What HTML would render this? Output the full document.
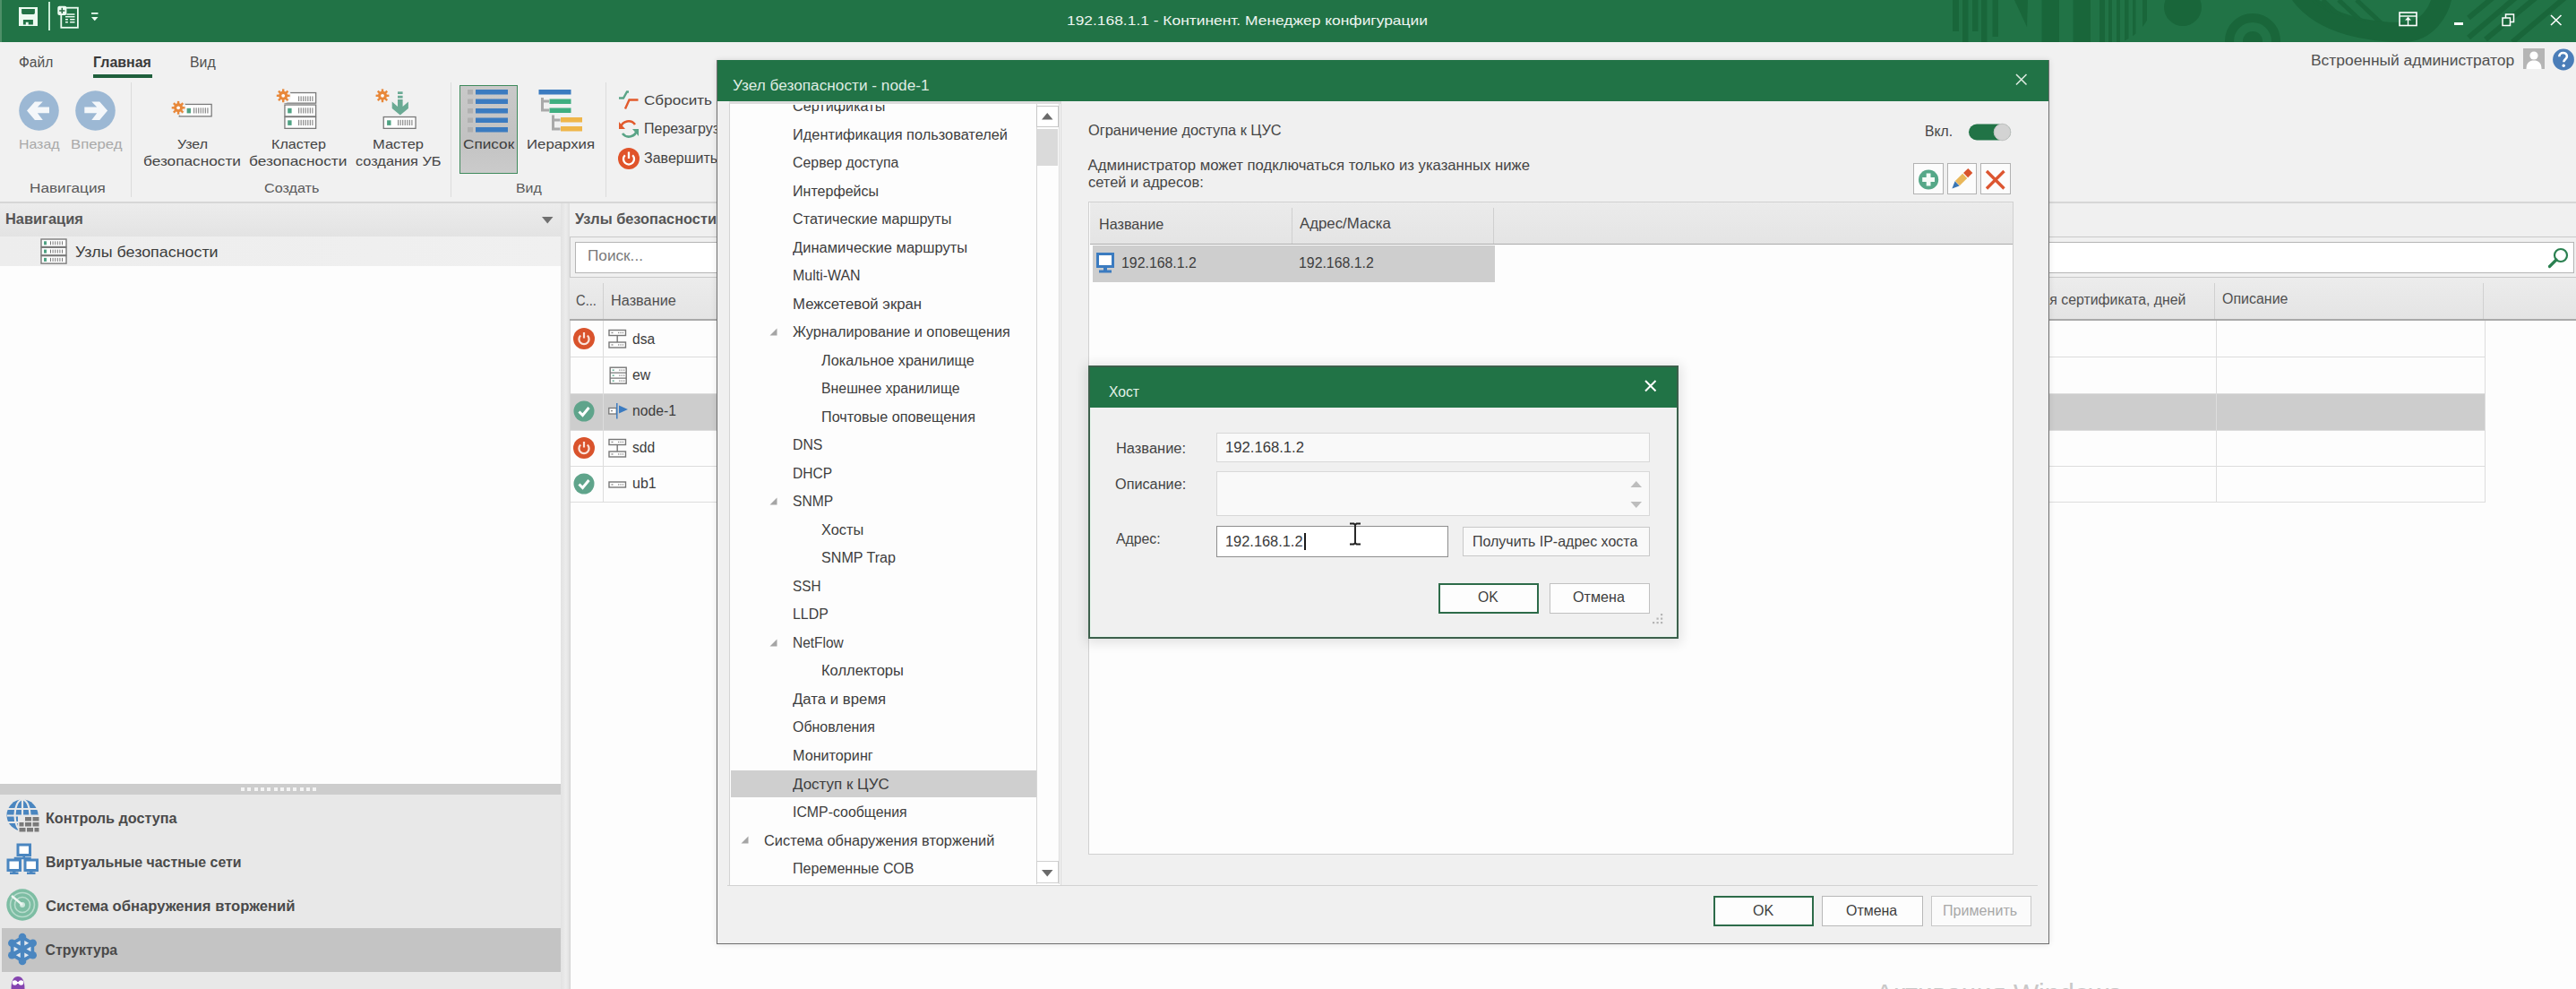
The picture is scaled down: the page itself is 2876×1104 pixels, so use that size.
<!DOCTYPE html><html><head><meta charset="utf-8"><title>Континент</title><style>
html,body{margin:0;padding:0;width:2876px;height:1104px;overflow:hidden;background:#f0f0f0;}
body{position:relative;font-family:"Liberation Sans",sans-serif;}
.a{position:absolute;box-sizing:border-box;}
.t{position:absolute;white-space:nowrap;line-height:1;transform-origin:0 0;font-family:"Liberation Sans",sans-serif;}
svg.a{overflow:visible;}
</style></head><body>
<div class="a " style="left:0.0px;top:0.0px;width:2876.0px;height:47.0px;background:#217346;"></div>
<div class="a " style="left:0.0px;top:0.0px;width:2.0px;height:47.0px;background:#4e8f68;"></div>
<svg class="a" style="left:2150.0px;top:0.0px;" width="726" height="47" viewBox="0 0 726 47">
<g fill="#19663a">
<rect x="30" y="0" width="7" height="35"/>
<rect x="41" y="0" width="6.5" height="47"/>
<rect x="52" y="0" width="6.5" height="35"/>
<rect x="62" y="0" width="6.5" height="47"/>
<rect x="74.5" y="0" width="6.5" height="41"/>
<path d="M99 0 L114 0 L113 30 Z"/>
<rect x="129.5" y="0" width="19.5" height="47"/>
<rect x="164.5" y="0" width="19.5" height="47"/>
</g>
<clipPath id="cp1"><circle cx="200" cy="-4" r="54"/></clipPath>
<g fill="#19663a" clip-path="url(#cp1)">
<rect x="194" y="0" width="6" height="47"/><rect x="204" y="0" width="4" height="47"/>
<rect x="213" y="0" width="4" height="47"/><rect x="222" y="0" width="4.5" height="47"/>
<rect x="231" y="0" width="3.5" height="47"/><rect x="242" y="0" width="5" height="47"/>
</g>
<circle cx="287" cy="8" r="21" fill="#19663a"/>
<circle cx="365" cy="46" r="26" fill="none" stroke="#19663a" stroke-width="10"/>
<circle cx="365" cy="46" r="11" fill="#19663a"/>
<path d="M418 -6C445 30 500 36 533 36C560 36 574 12 577 -6" fill="none" stroke="#19663a" stroke-width="22"/>
<clipPath id="cp2"><path d="M430 0C450 20 500 28 534 24C555 20 562 8 563 0Z"/></clipPath>
<g stroke="#19663a" stroke-width="5" clip-path="url(#cp2)">
<line x1="432" y1="0" x2="482" y2="47"/><line x1="443" y1="0" x2="493" y2="47"/>
<line x1="461" y1="0" x2="511" y2="47"/><line x1="481" y1="0" x2="531" y2="47"/>
</g>
<g stroke="#19663a" stroke-width="6">
<line x1="606" y1="20" x2="642" y2="-10"/><line x1="606" y1="42" x2="665" y2="-8"/>
<line x1="625" y1="44" x2="690" y2="-10"/><line x1="655" y1="47" x2="720" y2="-8"/>
</g>
</svg>
<svg class="a" style="left:21.0px;top:8.0px;" width="21" height="21" viewBox="0 0 21 21"><path fill="#ecfbf1" fill-rule="evenodd" d="M0 0H21V21H0Z M3.1 2V6.6Q3.1 8 4.5 8H16.5Q17.9 8 17.9 6.6V2Z M4.9 14V19.4H7.8V16.7H10.7V19.4H15.9V14Z"/></svg>
<div class="a " style="left:54.0px;top:2.0px;width:1.6px;height:31.6px;background:#c9ecd6;"></div>
<svg class="a" style="left:64.0px;top:6.0px;" width="24" height="26" viewBox="0 0 24 26">
<rect x="4.3" y="2.7" width="18.6" height="22.1" fill="none" stroke="#ecfbf1" stroke-width="1.8"/>
<rect x="0.3" y="0.7" width="10.1" height="10.3" fill="#ecfbf1" rx="2"/>
<path d="M5.3 2.8V9M2.2 5.9H8.4" stroke="#2a6a45" stroke-width="1.5"/>
<path d="M10.4 10H19.5" stroke="#ecfbf1" stroke-width="1.5"/>
<path d="M9 12.7H19.5" stroke="#ecfbf1" stroke-width="1.4"/>
<path d="M9 15.8H11.9M14.1 15.8H19.5M9 18.7H11.9M14.1 18.7H19.5" stroke="#ecfbf1" stroke-width="1.4"/>
</svg>
<svg class="a" style="left:102.0px;top:14.0px;" width="8" height="10" viewBox="0 0 8 10"><rect x="0" y="0" width="7.5" height="1.8" fill="#ecfbf1"/><path d="M0 5H7.5L3.75 9.2Z" fill="#ecfbf1"/></svg>
<div class="t" style="left:1191.00px;top:15.72px;font-size:14.97px;color:#eef5f0;transform:scale(1.1620,1.0000);">192.168.1.1 - Континент. Менеджер конфигурации</div>
<svg class="a" style="left:2678.0px;top:13.0px;" width="22" height="17" viewBox="0 0 22 17"><rect x="1" y="1" width="19" height="14.5" fill="none" stroke="#fff" stroke-width="1.6"/>
<path d="M1 5H20" stroke="#fff" stroke-width="1.4"/><path d="M10.5 6V15" stroke="#fff" stroke-width="1.4"/>
<path d="M7 9.5L10.5 6L14 9.5Z" fill="#fff"/></svg>
<div class="a " style="left:2740.0px;top:25.0px;width:10.0px;height:3.0px;background:#fff;"></div>
<svg class="a" style="left:2793.0px;top:15.0px;" width="15" height="15" viewBox="0 0 15 15"><rect x="1" y="5" width="8.5" height="8.5" fill="none" stroke="#fff" stroke-width="1.5"/>
<path d="M4.5 5V1H13.5V9.5H9.5" fill="none" stroke="#fff" stroke-width="1.5"/></svg>
<svg class="a" style="left:2847.0px;top:16.0px;" width="14" height="13" viewBox="0 0 14 13"><path d="M1 1L12.5 12M12.5 1L1 12" stroke="#fff" stroke-width="1.6"/></svg>
<div class="a " style="left:0.0px;top:47.0px;width:2876.0px;height:179.0px;background:#f1f1f1;"></div>
<div class="a " style="left:0.0px;top:225.0px;width:2876.0px;height:2.0px;background:#d6d6d6;"></div>
<div class="t" style="left:20.70px;top:61.59px;font-size:15.84px;color:#505050;transform:scale(0.9831,1.0000);">Файл</div>
<div class="t" style="left:104.00px;top:61.59px;font-size:15.84px;color:#3a3a3a;font-weight:700;transform:scale(1.0088,1.0000);font-weight:700;">Главная</div>
<div class="t" style="left:212.00px;top:61.59px;font-size:15.84px;color:#505050;">Вид</div>
<div class="a " style="left:103.5px;top:83.0px;width:66.0px;height:4.0px;background:#1f5f3c;"></div>
<div class="a " style="left:146.0px;top:92.0px;width:1.0px;height:128.0px;background:#dcdcdc;"></div>
<div class="a " style="left:503.0px;top:92.0px;width:1.0px;height:128.0px;background:#dcdcdc;"></div>
<div class="a " style="left:676.0px;top:92.0px;width:1.0px;height:128.0px;background:#dcdcdc;"></div>
<svg class="a" style="left:21.0px;top:101.0px;" width="46" height="46" viewBox="0 0 46 46"><circle cx="22.5" cy="22.5" r="22.3" fill="#9cb8d4"/>
<path d="M9 22.6L17.9 12.4H26.8L20.9 18.6H34V25.2H20.9L26.8 32.9H17.9Z" fill="#f4f7fa"/></svg>
<svg class="a" style="left:84.0px;top:101.0px;" width="46" height="46" viewBox="0 0 46 46"><circle cx="22.5" cy="22.5" r="22.3" fill="#9cb8d4"/>
<path d="M36.1 22.6L27.2 12.4H18.3L24.2 18.6H10.3V25.2H24.2L18.3 32.9H27.2Z" fill="#f4f7fa"/></svg>
<div class="t" style="left:20.50px;top:153.43px;font-size:15.55px;color:#a9a9a9;transform:scale(1.0211,1.0000);">Назад</div>
<div class="t" style="left:79.00px;top:153.43px;font-size:15.55px;color:#a9a9a9;transform:scale(1.0751,1.0000);">Вперед</div>
<div class="t" style="left:32.60px;top:202.08px;font-size:15.26px;color:#5a5a5a;transform:scale(1.1261,1.0000);">Навигация</div>
<svg class="a" style="left:185.0px;top:95.0px;" width="290" height="55" viewBox="0 0 290 55"><rect x="15.25" y="21.45" width="35.9" height="13.4" fill="#fff" stroke="#7a7a7a" stroke-width="1.3"/><rect x="23.6" y="25.8" width="4.4" height="5.6" fill="#4fa283"/><rect x="31" y="25.3" width="1.2" height="6.2" fill="#8a8a8a"/><rect x="33.55" y="25.3" width="1.2" height="6.2" fill="#8a8a8a"/><rect x="36.1" y="25.3" width="1.2" height="6.2" fill="#8a8a8a"/><rect x="38.65" y="25.3" width="1.2" height="6.2" fill="#8a8a8a"/><rect x="41.2" y="25.3" width="1.2" height="6.2" fill="#8a8a8a"/><rect x="43.75" y="25.3" width="1.2" height="6.2" fill="#8a8a8a"/><rect x="46.3" y="25.3" width="1.2" height="6.2" fill="#8a8a8a"/><circle cx="14.1" cy="25.3" r="8.6" fill="#f1f1f1"/><circle cx="14.1" cy="25.3" r="5" fill="#e8883a"/><line x1="17.60" y1="25.30" x2="21.50" y2="25.30" stroke="#e8883a" stroke-width="2.4"/><line x1="16.57" y1="27.77" x2="19.33" y2="30.53" stroke="#e8883a" stroke-width="2.4"/><line x1="14.10" y1="28.80" x2="14.10" y2="32.70" stroke="#e8883a" stroke-width="2.4"/><line x1="11.63" y1="27.77" x2="8.87" y2="30.53" stroke="#e8883a" stroke-width="2.4"/><line x1="10.60" y1="25.30" x2="6.70" y2="25.30" stroke="#e8883a" stroke-width="2.4"/><line x1="11.63" y1="22.83" x2="8.87" y2="20.07" stroke="#e8883a" stroke-width="2.4"/><line x1="14.10" y1="21.80" x2="14.10" y2="17.90" stroke="#e8883a" stroke-width="2.4"/><line x1="16.57" y1="22.83" x2="19.33" y2="20.07" stroke="#e8883a" stroke-width="2.4"/><circle cx="14.1" cy="25.3" r="1.9" fill="#fff"/><rect x="132.95" y="8.55" width="34.7" height="11.6" fill="#fff" stroke="#7a7a7a" stroke-width="1.3"/><rect x="148" y="12.4" width="1.2" height="5.6" fill="#8a8a8a"/><rect x="150.55" y="12.4" width="1.2" height="5.6" fill="#8a8a8a"/><rect x="153.1" y="12.4" width="1.2" height="5.6" fill="#8a8a8a"/><rect x="155.65" y="12.4" width="1.2" height="5.6" fill="#8a8a8a"/><rect x="158.2" y="12.4" width="1.2" height="5.6" fill="#8a8a8a"/><rect x="160.75" y="12.4" width="1.2" height="5.6" fill="#8a8a8a"/><rect x="163.3" y="12.4" width="1.2" height="5.6" fill="#8a8a8a"/><rect x="132.95" y="22.05" width="34.7" height="12.9" fill="#fff" stroke="#7a7a7a" stroke-width="1.3"/><rect x="136.2" y="25.8" width="4.4" height="5.6" fill="#4fa283"/><rect x="148" y="25.3" width="1.2" height="6.2" fill="#8a8a8a"/><rect x="150.55" y="25.3" width="1.2" height="6.2" fill="#8a8a8a"/><rect x="153.1" y="25.3" width="1.2" height="6.2" fill="#8a8a8a"/><rect x="155.65" y="25.3" width="1.2" height="6.2" fill="#8a8a8a"/><rect x="158.2" y="25.3" width="1.2" height="6.2" fill="#8a8a8a"/><rect x="160.75" y="25.3" width="1.2" height="6.2" fill="#8a8a8a"/><rect x="163.3" y="25.3" width="1.2" height="6.2" fill="#8a8a8a"/><rect x="132.95" y="35.55" width="34.7" height="12.8" fill="#fff" stroke="#7a7a7a" stroke-width="1.3"/><rect x="136.2" y="39.3" width="4.4" height="5.6" fill="#4fa283"/><rect x="148" y="38.8" width="1.2" height="6.2" fill="#8a8a8a"/><rect x="150.55" y="38.8" width="1.2" height="6.2" fill="#8a8a8a"/><rect x="153.1" y="38.8" width="1.2" height="6.2" fill="#8a8a8a"/><rect x="155.65" y="38.8" width="1.2" height="6.2" fill="#8a8a8a"/><rect x="158.2" y="38.8" width="1.2" height="6.2" fill="#8a8a8a"/><rect x="160.75" y="38.8" width="1.2" height="6.2" fill="#8a8a8a"/><rect x="163.3" y="38.8" width="1.2" height="6.2" fill="#8a8a8a"/><circle cx="131.2" cy="11.8" r="8.6" fill="#f1f1f1"/><circle cx="131.2" cy="11.8" r="5" fill="#e8883a"/><line x1="134.70" y1="11.80" x2="138.60" y2="11.80" stroke="#e8883a" stroke-width="2.4"/><line x1="133.67" y1="14.27" x2="136.43" y2="17.03" stroke="#e8883a" stroke-width="2.4"/><line x1="131.20" y1="15.30" x2="131.20" y2="19.20" stroke="#e8883a" stroke-width="2.4"/><line x1="128.73" y1="14.27" x2="125.97" y2="17.03" stroke="#e8883a" stroke-width="2.4"/><line x1="127.70" y1="11.80" x2="123.80" y2="11.80" stroke="#e8883a" stroke-width="2.4"/><line x1="128.73" y1="9.33" x2="125.97" y2="6.57" stroke="#e8883a" stroke-width="2.4"/><line x1="131.20" y1="8.30" x2="131.20" y2="4.40" stroke="#e8883a" stroke-width="2.4"/><line x1="133.67" y1="9.33" x2="136.43" y2="6.57" stroke="#e8883a" stroke-width="2.4"/><circle cx="131.2" cy="11.8" r="1.9" fill="#fff"/><rect x="243.25" y="35.55" width="35.8" height="12.8" fill="#fff" stroke="#7a7a7a" stroke-width="1.3"/><rect x="247.1" y="39.3" width="4.4" height="5.6" fill="#4fa283"/><rect x="259" y="38.8" width="1.2" height="6.2" fill="#8a8a8a"/><rect x="261.55" y="38.8" width="1.2" height="6.2" fill="#8a8a8a"/><rect x="264.1" y="38.8" width="1.2" height="6.2" fill="#8a8a8a"/><rect x="266.65" y="38.8" width="1.2" height="6.2" fill="#8a8a8a"/><rect x="269.2" y="38.8" width="1.2" height="6.2" fill="#8a8a8a"/><rect x="271.75" y="38.8" width="1.2" height="6.2" fill="#8a8a8a"/><rect x="274.3" y="38.8" width="1.2" height="6.2" fill="#8a8a8a"/><circle cx="242" cy="11.8" r="8.6" fill="#f1f1f1"/><circle cx="242" cy="11.8" r="5" fill="#e8883a"/><line x1="245.50" y1="11.80" x2="249.40" y2="11.80" stroke="#e8883a" stroke-width="2.4"/><line x1="244.47" y1="14.27" x2="247.23" y2="17.03" stroke="#e8883a" stroke-width="2.4"/><line x1="242.00" y1="15.30" x2="242.00" y2="19.20" stroke="#e8883a" stroke-width="2.4"/><line x1="239.53" y1="14.27" x2="236.77" y2="17.03" stroke="#e8883a" stroke-width="2.4"/><line x1="238.50" y1="11.80" x2="234.60" y2="11.80" stroke="#e8883a" stroke-width="2.4"/><line x1="239.53" y1="9.33" x2="236.77" y2="6.57" stroke="#e8883a" stroke-width="2.4"/><line x1="242.00" y1="8.30" x2="242.00" y2="4.40" stroke="#e8883a" stroke-width="2.4"/><line x1="244.47" y1="9.33" x2="247.23" y2="6.57" stroke="#e8883a" stroke-width="2.4"/><circle cx="242" cy="11.8" r="1.9" fill="#fff"/><rect x="259" y="7.3" width="5.6" height="2.7" fill="#6aaa94"/><rect x="259" y="11.8" width="5.6" height="2.8" fill="#6aaa94"/>
<path d="M259 16V24L252.7 18.6V26L261.8 33.4L270.9 26V18.6L264.6 24V16Z" fill="#6aaa94"/></svg>
<div class="t" style="left:198.00px;top:153.43px;font-size:15.55px;color:#444444;transform:scale(1.0249,1.0000);">Узел</div>
<div class="t" style="left:160.00px;top:172.43px;font-size:15.55px;color:#444444;transform:scale(1.1086,1.0000);">безопасности</div>
<div class="t" style="left:303.00px;top:153.43px;font-size:15.55px;color:#444444;transform:scale(1.0373,1.0000);">Кластер</div>
<div class="t" style="left:278.00px;top:172.43px;font-size:15.55px;color:#444444;transform:scale(1.1137,1.0000);">безопасности</div>
<div class="t" style="left:416.00px;top:153.43px;font-size:15.55px;color:#444444;transform:scale(1.0592,1.0000);">Мастер</div>
<div class="t" style="left:396.60px;top:172.43px;font-size:15.55px;color:#444444;transform:scale(1.0500,1.0000);">создания УБ</div>
<div class="t" style="left:295.00px;top:202.08px;font-size:15.26px;color:#5a5a5a;transform:scale(1.0604,1.0000);">Создать</div>
<div class="a " style="left:513.0px;top:95.0px;width:65.0px;height:99.0px;background:linear-gradient(#c9c9c9,#c2c2c2 60%,#cbcbcb);border:1.5px solid #3f8a5c;"></div>
<svg class="a" style="left:521.0px;top:99.0px;" width="48" height="60" viewBox="0 0 48 60"><rect x="1" y="1" width="6" height="5.5" fill="#b0b0b0"/><rect x="10" y="1" width="36" height="5.5" fill="#3b7bc0"/><rect x="1" y="11.5" width="6" height="5.5" fill="#b0b0b0"/><rect x="10" y="11.5" width="36" height="5.5" fill="#3b7bc0"/><rect x="1" y="22" width="6" height="5.5" fill="#b0b0b0"/><rect x="10" y="22" width="36" height="5.5" fill="#3b7bc0"/><rect x="1" y="32.5" width="6" height="5.5" fill="#b0b0b0"/><rect x="10" y="32.5" width="36" height="5.5" fill="#3b7bc0"/><rect x="1" y="43" width="6" height="5.5" fill="#b0b0b0"/><rect x="10" y="43" width="36" height="5.5" fill="#3b7bc0"/></svg>
<div class="t" style="left:517.00px;top:152.63px;font-size:15.55px;color:#3c3c3c;transform:scale(1.1054,1.0000);">Список</div>
<svg class="a" style="left:600.0px;top:99.0px;" width="52" height="60" viewBox="0 0 52 60"><rect x="1.5" y="1" width="36" height="5.5" fill="#3b7bc0"/>
<path d="M5.5 10V24H13M5.5 14H13" fill="none" stroke="#a9a9a9" stroke-width="3"/>
<rect x="13.5" y="11.5" width="24" height="5.5" fill="#3fae80"/><rect x="13.5" y="21.5" width="24" height="5.5" fill="#3fae80"/>
<path d="M17.5 29.5V45H25.5M17.5 35H25.5" fill="none" stroke="#a9a9a9" stroke-width="3"/>
<rect x="26" y="32" width="24" height="5.5" fill="#efb64a"/><rect x="26" y="42" width="24" height="5.5" fill="#efb64a"/></svg>
<div class="t" style="left:587.70px;top:152.63px;font-size:15.55px;color:#444444;transform:scale(1.0797,1.0000);">Иерархия</div>
<div class="t" style="left:575.80px;top:202.08px;font-size:15.26px;color:#5a5a5a;transform:scale(1.0431,1.0000);">Вид</div>
<svg class="a" style="left:690.0px;top:100.0px;" width="24" height="23" viewBox="0 0 24 23"><path d="M1 9.5H6L10 2.5H12" fill="none" stroke="#5aa487" stroke-width="2.4"/>
<path d="M8 21.5L12.5 11.5H22.5" fill="none" stroke="#e25a2c" stroke-width="2.4"/></svg>
<div class="t" style="left:719.00px;top:104.13px;font-size:15.55px;color:#444444;transform:scale(1.0994,1.0000);">Сбросить</div>
<svg class="a" style="left:690.0px;top:133.0px;" width="24" height="22" viewBox="0 0 24 22"><path d="M3 9A9 9 0 0 1 19 6" fill="none" stroke="#e25a2c" stroke-width="2.6"/><path d="M1 3V11H8Z" fill="#e25a2c"/>
<path d="M21 12A9 9 0 0 1 5 16" fill="none" stroke="#5aa487" stroke-width="2.6"/><path d="M23 19V11H16Z" fill="#5aa487"/></svg>
<div class="t" style="left:719.00px;top:136.45px;font-size:16.00px;color:#444444;">Перезагрузить</div>
<svg class="a" style="left:690.0px;top:165.0px;" width="25" height="25" viewBox="0 0 25 25"><circle cx="12" cy="12" r="12" fill="#e0532a"/>
<path d="M7.8 8.3A6 6 0 1 0 16.2 8.3" fill="none" stroke="#fff" stroke-width="2.3"/><path d="M12 4.5V12" stroke="#fff" stroke-width="2.3"/></svg>
<div class="t" style="left:719.00px;top:168.95px;font-size:16.00px;color:#444444;">Завершить</div>
<div class="t" style="left:2580.20px;top:59.79px;font-size:15.84px;color:#505050;transform:scale(1.0993,1.0000);">Встроенный администратор</div>
<svg class="a" style="left:2817.0px;top:54.0px;" width="24" height="23" viewBox="0 0 24 23"><rect x="0" y="0" width="24" height="23" fill="#b5b5b5"/>
<circle cx="12" cy="8" r="4.6" fill="#fff"/><path d="M3.5 23C3.5 16 7 13.5 12 13.5C17 13.5 20.5 16 20.5 23Z" fill="#fff"/></svg>
<svg class="a" style="left:2849.0px;top:54.0px;" width="25" height="25" viewBox="0 0 25 25"><circle cx="13" cy="12.5" r="11.9" fill="#4a7db8"/>
<path d="M8.3 9.2C8.3 6.5 10.2 5 12.6 5C15 5 16.9 6.5 16.9 9C16.9 11.8 13.3 12.2 13.3 15.3" fill="none" stroke="#fff" stroke-width="2.6"/>
<circle cx="13.2" cy="19.2" r="1.7" fill="#fff"/></svg>
<div class="a " style="left:0.0px;top:227.0px;width:626.0px;height:877.0px;background:#fdfdfd;"></div>
<div class="a " style="left:0.0px;top:227.0px;width:626.0px;height:37.0px;background:linear-gradient(#ececec,#e3e3e3);"></div>
<div class="t" style="left:6.40px;top:237.36px;font-size:15.99px;color:#555;font-weight:700;transform:scale(1.0257,1.0000);">Навигация</div>
<svg class="a" style="left:605.0px;top:242.0px;" width="13" height="8" viewBox="0 0 13 8"><path d="M0 0H12.5L6.25 7.5Z" fill="#707070"/></svg>
<div class="a " style="left:0.0px;top:264.0px;width:626.0px;height:33.0px;background:linear-gradient(90deg,#ededed,#f0f0f0);"></div>
<svg class="a" style="left:45.0px;top:266.0px;" width="31" height="30" viewBox="0 0 31 30"><rect x="1" y="1" width="28" height="8.5" fill="#fff" stroke="#7a7a7a" stroke-width="1.4"/><rect x="4" y="3.3" width="3" height="4" fill="#4fa283"/><rect x="11" y="3.3" width="1" height="4" fill="#777"/><rect x="13.6" y="3.3" width="1" height="4" fill="#777"/><rect x="16.2" y="3.3" width="1" height="4" fill="#777"/><rect x="18.8" y="3.3" width="1" height="4" fill="#777"/><rect x="21.4" y="3.3" width="1" height="4" fill="#777"/><rect x="24" y="3.3" width="1" height="4" fill="#777"/><rect x="1" y="10.3" width="28" height="8.5" fill="#fff" stroke="#7a7a7a" stroke-width="1.4"/><rect x="4" y="12.6" width="3" height="4" fill="#4fa283"/><rect x="11" y="12.6" width="1" height="4" fill="#777"/><rect x="13.6" y="12.6" width="1" height="4" fill="#777"/><rect x="16.2" y="12.6" width="1" height="4" fill="#777"/><rect x="18.8" y="12.6" width="1" height="4" fill="#777"/><rect x="21.4" y="12.6" width="1" height="4" fill="#777"/><rect x="24" y="12.6" width="1" height="4" fill="#777"/><rect x="1" y="19.6" width="28" height="8.5" fill="#fff" stroke="#7a7a7a" stroke-width="1.4"/><rect x="4" y="21.9" width="3" height="4" fill="#4fa283"/><rect x="11" y="21.9" width="1" height="4" fill="#777"/><rect x="13.6" y="21.9" width="1" height="4" fill="#777"/><rect x="16.2" y="21.9" width="1" height="4" fill="#777"/><rect x="18.8" y="21.9" width="1" height="4" fill="#777"/><rect x="21.4" y="21.9" width="1" height="4" fill="#777"/><rect x="24" y="21.9" width="1" height="4" fill="#777"/></svg>
<div class="t" style="left:83.80px;top:272.60px;font-size:17.01px;color:#3c3c3c;transform:scale(1.0512,1.0000);">Узлы безопасности</div>
<div class="a " style="left:0.0px;top:875.0px;width:626.0px;height:12.0px;background:#cdcdcd;"></div>
<div class="a " style="left:269.0px;top:879.0px;width:4.0px;height:4.0px;background:#f4f4f4;"></div>
<div class="a " style="left:276.3px;top:879.0px;width:4.0px;height:4.0px;background:#f4f4f4;"></div>
<div class="a " style="left:283.6px;top:879.0px;width:4.0px;height:4.0px;background:#f4f4f4;"></div>
<div class="a " style="left:290.9px;top:879.0px;width:4.0px;height:4.0px;background:#f4f4f4;"></div>
<div class="a " style="left:298.2px;top:879.0px;width:4.0px;height:4.0px;background:#f4f4f4;"></div>
<div class="a " style="left:305.5px;top:879.0px;width:4.0px;height:4.0px;background:#f4f4f4;"></div>
<div class="a " style="left:312.8px;top:879.0px;width:4.0px;height:4.0px;background:#f4f4f4;"></div>
<div class="a " style="left:320.1px;top:879.0px;width:4.0px;height:4.0px;background:#f4f4f4;"></div>
<div class="a " style="left:327.4px;top:879.0px;width:4.0px;height:4.0px;background:#f4f4f4;"></div>
<div class="a " style="left:334.7px;top:879.0px;width:4.0px;height:4.0px;background:#f4f4f4;"></div>
<div class="a " style="left:342.0px;top:879.0px;width:4.0px;height:4.0px;background:#f4f4f4;"></div>
<div class="a " style="left:349.3px;top:879.0px;width:4.0px;height:4.0px;background:#f4f4f4;"></div>
<div class="a " style="left:0.0px;top:887.0px;width:626.0px;height:217.0px;background:#e8e8e8;"></div>
<div class="a " style="left:2.0px;top:1036.0px;width:624.0px;height:49.0px;background:#c4c4c4;"></div>
<div class="t" style="left:50.60px;top:905.79px;font-size:15.84px;color:#4a4a4a;font-weight:700;transform:scale(1.0220,1.0000);">Контроль доступа</div>
<div class="t" style="left:50.60px;top:954.59px;font-size:15.84px;color:#4a4a4a;font-weight:700;transform:scale(1.0030,1.0000);">Виртуальные частные сети</div>
<div class="t" style="left:50.60px;top:1003.99px;font-size:15.84px;color:#4a4a4a;font-weight:700;transform:scale(1.0509,1.0000);">Система обнаружения вторжений</div>
<div class="t" style="left:50.60px;top:1053.39px;font-size:15.84px;color:#4a4a4a;font-weight:700;">Структура</div>
<svg class="a" style="left:7.0px;top:892.0px;" width="38" height="38" viewBox="0 0 38 38"><circle cx="18" cy="18" r="17.5" fill="#4a86c0"/>
<g stroke="#e8e8e8" stroke-width="2.2" fill="none">
<path d="M1 11H35M1 18.5H35M1 26H35"/><ellipse cx="18" cy="18" rx="8.5" ry="17.5"/><path d="M18 0.5V35.5"/></g>
<rect x="13" y="18" width="25" height="20" fill="#e8e8e8"/>
<g fill="#7a7a7a"><rect x="21" y="20" width="7" height="4.5"/><rect x="29.5" y="20" width="7" height="4.5"/>
<rect x="14.5" y="26" width="5" height="4.5"/><rect x="21" y="26" width="7" height="4.5"/><rect x="29.5" y="26" width="7" height="4.5"/>
<rect x="14.5" y="32" width="7" height="4.5"/><rect x="23" y="32" width="7" height="4.5"/><rect x="31.5" y="32" width="5" height="4.5"/></g></svg>
<svg class="a" style="left:7.0px;top:941.0px;" width="36" height="36" viewBox="0 0 36 36"><g fill="#fff" stroke="#4a86c0" stroke-width="3">
<rect x="13" y="2" width="13.5" height="11.5"/><rect x="2" y="19" width="13.5" height="11.5"/><rect x="21" y="19" width="13.5" height="11.5"/></g>
<path d="M19.75 13.5V17M8.75 17H27.75" stroke="#4a86c0" stroke-width="2.6" fill="none"/>
<g fill="#4a86c0"><rect x="7" y="30" width="3.5" height="3"/><rect x="4" y="32.5" width="9.5" height="2.5"/>
<rect x="26" y="30" width="3.5" height="3"/><rect x="23" y="32.5" width="9.5" height="2.5"/></g></svg>
<svg class="a" style="left:7.0px;top:992.0px;" width="37" height="37" viewBox="0 0 37 37"><circle cx="18" cy="18" r="17.7" fill="#7dbda3"/>
<g fill="none" stroke="#b8dccd"><circle cx="18" cy="18" r="13.5" stroke-width="1.6"/>
<circle cx="18" cy="18" r="8.5" stroke-width="1.6"/></g><circle cx="18" cy="18" r="3" fill="#cfe7dd"/>
<path d="M18 18L6 8" stroke="#eef6f2" stroke-width="2.4"/></svg>
<svg class="a" style="left:9.0px;top:1042.0px;" width="34" height="36" viewBox="0 0 34 36"><polygon points="16.00,4.00 27.69,10.75 27.69,24.25 16.00,31.00 4.31,24.25 4.31,10.75" fill="#4a86c0" stroke="#4a86c0" stroke-width="3" stroke-linejoin="round"/><polygon points="18.26,13.59 18.26,7.92 23.17,10.75" fill="#e3e9f0"/><polygon points="20.52,17.50 25.43,14.66 25.43,20.34" fill="#e3e9f0"/><polygon points="18.26,21.41 23.17,24.25 18.26,27.09" fill="#e3e9f0"/><polygon points="13.74,21.41 13.74,27.09 8.83,24.25" fill="#e3e9f0"/><polygon points="11.48,17.50 6.57,20.34 6.57,14.66" fill="#e3e9f0"/><polygon points="13.74,13.59 8.83,10.75 13.74,7.92" fill="#e3e9f0"/><circle cx="16.00" cy="4.00" r="4.3" fill="#4a86c0"/><circle cx="27.69" cy="10.75" r="4.3" fill="#4a86c0"/><circle cx="27.69" cy="24.25" r="4.3" fill="#4a86c0"/><circle cx="16.00" cy="31.00" r="4.3" fill="#4a86c0"/><circle cx="4.31" cy="24.25" r="4.3" fill="#4a86c0"/><circle cx="4.31" cy="10.75" r="4.3" fill="#4a86c0"/></svg>
<svg class="a" style="left:11.0px;top:1089.0px;" width="18" height="15" viewBox="0 0 18 15"><path d="M1.5 15C1.5 5 4.5 1 9 1C13.5 1 16.5 5 16.5 15Z" fill="#8544b0"/>
<circle cx="5.5" cy="8" r="2.8" fill="#fff"/><circle cx="12.5" cy="8" r="2.8" fill="#fff"/><rect x="5" y="7" width="8" height="2" fill="#fff"/></svg>
<div class="a " style="left:626.0px;top:227.0px;width:10.0px;height:877.0px;background:linear-gradient(90deg,#e2e2e2,#ececec 60%,#dedede);"></div>
<div class="a " style="left:636.0px;top:227.0px;width:2240.0px;height:877.0px;background:#fdfdfd;"></div>
<div class="a " style="left:636.0px;top:227.0px;width:2240.0px;height:37.0px;background:#f0f0f0;"></div>
<div class="t" style="left:642.00px;top:236.86px;font-size:15.99px;color:#555;font-weight:700;transform:scale(1.0231,1.0000);">Узлы безопасности</div>
<div class="a " style="left:636.0px;top:264.0px;width:2240.0px;height:46.0px;background:#f0f0f0;border:1px solid #c9c9c9;border-right:none;"></div>
<div class="a " style="left:642.0px;top:269.5px;width:2232.0px;height:35.5px;background:#fff;border:1.5px solid #b5b5b5;"></div>
<div class="t" style="left:656.00px;top:278.09px;font-size:15.84px;color:#7a7a7a;transform:scale(1.0858,1.0000);">Поиск...</div>
<svg class="a" style="left:2845.0px;top:276.0px;" width="23" height="23" viewBox="0 0 23 23"><circle cx="14" cy="9" r="7" fill="none" stroke="#2a8050" stroke-width="2.2"/>
<path d="M9 14L1.5 21.5" stroke="#2a8050" stroke-width="3.2" stroke-linecap="round"/></svg>
<div class="a " style="left:636.0px;top:310.0px;width:2240.0px;height:47.0px;background:linear-gradient(#ececec,#e4e4e4);"></div>
<div class="a " style="left:636.0px;top:356.0px;width:2240.0px;height:2.0px;background:#a9a9a9;"></div>
<div class="a " style="left:672.5px;top:316.0px;width:1.0px;height:40.0px;background:#d0d0d0;"></div>
<div class="a " style="left:2472.0px;top:316.0px;width:1.0px;height:40.0px;background:#d0d0d0;"></div>
<div class="a " style="left:2772.0px;top:316.0px;width:1.0px;height:40.0px;background:#d0d0d0;"></div>
<div class="t" style="left:643.00px;top:327.59px;font-size:15.84px;color:#505050;transform:scale(0.9330,1.0000);">С...</div>
<div class="t" style="left:681.70px;top:327.59px;font-size:15.84px;color:#505050;transform:scale(1.0296,1.0000);">Название</div>
<div class="t" style="left:2188.70px;top:327.19px;font-size:15.84px;color:#505050;">Срок действия сертификата, дней</div>
<div class="t" style="left:2480.50px;top:326.09px;font-size:15.84px;color:#505050;transform:scale(1.0083,1.0000);">Описание</div>
<div class="a " style="left:637.0px;top:439.5px;width:2137.0px;height:40.5px;background:#cdcdcd;"></div>
<div class="a " style="left:637.0px;top:398.0px;width:2137.0px;height:1.0px;background:#dddddd;"></div>
<div class="a " style="left:637.0px;top:438.5px;width:2137.0px;height:1.0px;background:#dddddd;"></div>
<div class="a " style="left:637.0px;top:479.5px;width:2137.0px;height:1.0px;background:#dddddd;"></div>
<div class="a " style="left:637.0px;top:519.5px;width:2137.0px;height:1.0px;background:#dddddd;"></div>
<div class="a " style="left:637.0px;top:560.0px;width:2137.0px;height:1.0px;background:#dddddd;"></div>
<div class="a " style="left:673.0px;top:358.0px;width:1.0px;height:202.0px;background:#dddddd;"></div>
<div class="a " style="left:2474.0px;top:358.0px;width:1.0px;height:202.0px;background:#dddddd;"></div>
<div class="a " style="left:2774.0px;top:358.0px;width:1.0px;height:203.0px;background:#dddddd;"></div>
<div class="a " style="left:636.0px;top:358.0px;width:1.0px;height:746.0px;background:#d4d4d4;"></div>
<svg class="a" style="left:640.0px;top:366.0px;" width="25" height="25" viewBox="0 0 25 25"><circle cx="12" cy="12" r="12" fill="#d9532c"/>
<path d="M8.2 8.5A5.6 5.6 0 1 0 15.8 8.5" fill="none" stroke="#fbe3da" stroke-width="2.2"/><path d="M12 5V11.5" stroke="#fbe3da" stroke-width="2.2"/></svg>
<svg class="a" style="left:640.0px;top:447.0px;" width="25" height="25" viewBox="0 0 25 25"><circle cx="12" cy="12" r="11.5" fill="#5fa48b"/>
<path d="M6.5 12.5L10.5 16.5L17.5 8" fill="none" stroke="#fff" stroke-width="3"/></svg>
<svg class="a" style="left:640.0px;top:488.0px;" width="25" height="25" viewBox="0 0 25 25"><circle cx="12" cy="12" r="12" fill="#d9532c"/>
<path d="M8.2 8.5A5.6 5.6 0 1 0 15.8 8.5" fill="none" stroke="#fbe3da" stroke-width="2.2"/><path d="M12 5V11.5" stroke="#fbe3da" stroke-width="2.2"/></svg>
<svg class="a" style="left:640.0px;top:528.0px;" width="25" height="25" viewBox="0 0 25 25"><circle cx="12" cy="12" r="11.5" fill="#5fa48b"/>
<path d="M6.5 12.5L10.5 16.5L17.5 8" fill="none" stroke="#fff" stroke-width="3"/></svg>
<svg class="a" style="left:679.0px;top:368.0px;" width="22" height="22" viewBox="0 0 22 22"><rect x="1" y="0.5" width="18.5" height="6" fill="#fff" stroke="#777" stroke-width="1.4"/>
<rect x="1" y="14" width="18.5" height="6" fill="#fff" stroke="#777" stroke-width="1.4"/>
<path d="M10.2 6.5V14" stroke="#777" stroke-width="1.4"/><rect x="3.5" y="2.8" width="2" height="1.3" fill="#888"/><rect x="11" y="2.8" width="1.3" height="1.3" fill="#888"/><rect x="13.4" y="2.8" width="1.3" height="1.3" fill="#888"/><rect x="15.8" y="2.8" width="1.3" height="1.3" fill="#888"/><rect x="3.5" y="16.3" width="2" height="1.3" fill="#888"/><rect x="11" y="16.3" width="1.3" height="1.3" fill="#888"/><rect x="13.4" y="16.3" width="1.3" height="1.3" fill="#888"/><rect x="15.8" y="16.3" width="1.3" height="1.3" fill="#888"/></svg>
<svg class="a" style="left:680.0px;top:409.0px;" width="22" height="22" viewBox="0 0 22 22"><rect x="1.2" y="1.2" width="18" height="18" fill="#fff" stroke="#777" stroke-width="1.4"/>
<path d="M1.2 7.2H19.2M1.2 13.2H19.2" stroke="#777" stroke-width="1.2"/><rect x="3.7" y="3.5" width="2" height="1.3" fill="#4fa283"/><rect x="11.2" y="3.5" width="1.3" height="1.3" fill="#888"/><rect x="13.6" y="3.5" width="1.3" height="1.3" fill="#888"/><rect x="16" y="3.5" width="1.3" height="1.3" fill="#888"/><rect x="3.7" y="9.5" width="2" height="1.3" fill="#4fa283"/><rect x="11.2" y="9.5" width="1.3" height="1.3" fill="#888"/><rect x="13.6" y="9.5" width="1.3" height="1.3" fill="#888"/><rect x="16" y="9.5" width="1.3" height="1.3" fill="#888"/><rect x="3.7" y="15.5" width="2" height="1.3" fill="#4fa283"/><rect x="11.2" y="15.5" width="1.3" height="1.3" fill="#888"/><rect x="13.6" y="15.5" width="1.3" height="1.3" fill="#888"/><rect x="16" y="15.5" width="1.3" height="1.3" fill="#888"/></svg>
<svg class="a" style="left:679.0px;top:449.0px;" width="24" height="22" viewBox="0 0 24 22"><rect x="0.8" y="6.5" width="8.5" height="6.5" fill="#fff" stroke="#777" stroke-width="1.3"/>
<rect x="3" y="9" width="2" height="1.3" fill="#888"/>
<path d="M9.8 1V18.5" stroke="#3b7bc0" stroke-width="1.5"/><path d="M12 3.5L22 8L12 12.5Z" fill="#3b7bc0"/></svg>
<svg class="a" style="left:679.0px;top:490.0px;" width="22" height="22" viewBox="0 0 22 22"><rect x="1" y="0.5" width="18.5" height="6" fill="#fff" stroke="#777" stroke-width="1.4"/>
<rect x="1" y="14" width="18.5" height="6" fill="#fff" stroke="#777" stroke-width="1.4"/>
<path d="M10.2 6.5V14" stroke="#777" stroke-width="1.4"/><rect x="3.5" y="2.8" width="2" height="1.3" fill="#888"/><rect x="11" y="2.8" width="1.3" height="1.3" fill="#888"/><rect x="13.4" y="2.8" width="1.3" height="1.3" fill="#888"/><rect x="15.8" y="2.8" width="1.3" height="1.3" fill="#888"/><rect x="3.5" y="16.3" width="2" height="1.3" fill="#888"/><rect x="11" y="16.3" width="1.3" height="1.3" fill="#888"/><rect x="13.4" y="16.3" width="1.3" height="1.3" fill="#888"/><rect x="15.8" y="16.3" width="1.3" height="1.3" fill="#888"/></svg>
<svg class="a" style="left:679.0px;top:537.0px;" width="22" height="10" viewBox="0 0 22 10"><rect x="1" y="1" width="18.5" height="6" fill="#fff" stroke="#777" stroke-width="1.4"/><rect x="3.5" y="3.3" width="2" height="1.3" fill="#888"/><rect x="11" y="3.3" width="1.3" height="1.3" fill="#888"/><rect x="13.4" y="3.3" width="1.3" height="1.3" fill="#888"/><rect x="15.8" y="3.3" width="1.3" height="1.3" fill="#888"/></svg>
<div class="t" style="left:705.70px;top:371.09px;font-size:15.84px;color:#3c3c3c;transform:scale(0.9900,1.0000);">dsa</div>
<div class="t" style="left:705.70px;top:410.11px;font-size:17.00px;color:#3c3c3c;transform:scale(0.9322,1.0000);">ew</div>
<div class="t" style="left:705.70px;top:451.19px;font-size:15.84px;color:#3c3c3c;transform:scale(0.9912,1.0000);">node-1</div>
<div class="t" style="left:705.70px;top:492.39px;font-size:15.84px;color:#3c3c3c;transform:scale(0.9906,1.0000);">sdd</div>
<div class="t" style="left:705.70px;top:532.39px;font-size:15.84px;color:#3c3c3c;transform:scale(1.0103,1.0000);">ub1</div>
<div class="t" style="left:2094.00px;top:1094.10px;font-size:30.00px;color:#c8c8c8;transform:scale(0.9946,1.0000);">Активация Windows</div>
<div class="a " style="left:800.0px;top:67.0px;width:1487.5px;height:986.5px;background:#f0f0f0;border:1.5px solid #6f6f6f;box-shadow:0 0 6px rgba(0,0,0,0.12);"></div>
<div class="a " style="left:801.0px;top:67.0px;width:1485.5px;height:46.0px;background:#217346;"></div>
<div class="t" style="left:817.80px;top:87.29px;font-size:16.42px;color:#dfece3;transform:scale(1.0508,1.0000);">Узел безопасности - node-1</div>
<svg class="a" style="left:2250.0px;top:82.0px;" width="14" height="14" viewBox="0 0 14 14"><path d="M1 1L12.5 12.5M12.5 1L1 12.5" stroke="#dbe9df" stroke-width="1.6"/></svg>
<div class="a " style="left:813.5px;top:113.0px;width:371.0px;height:875.5px;background:#fdfdfd;border:1px solid #d4d4d4;border-top:3px solid #dcdcdc;"></div>
<div class="a " style="left:816.0px;top:860.0px;width:340.5px;height:30.0px;background:#cfcfcf;"></div>
<div class="a" style="left:814px;top:116.5px;width:343px;height:870px;overflow:hidden;">
<div class="t" style="left:71.00px;top:-6.46px;font-size:17.30px;color:#3e3e3e;transform:scale(0.9368,1.0000);">Сертификаты</div>
<div class="t" style="left:71.40px;top:25.06px;font-size:17.30px;color:#3e3e3e;transform:scale(0.9459,1.0000);">Идентификация пользователей</div>
<div class="t" style="left:71.20px;top:56.58px;font-size:17.30px;color:#3e3e3e;transform:scale(0.9193,1.0000);">Сервер доступа</div>
<div class="t" style="left:71.20px;top:88.10px;font-size:17.30px;color:#3e3e3e;transform:scale(0.9291,1.0000);">Интерфейсы</div>
<div class="t" style="left:71.20px;top:119.62px;font-size:17.30px;color:#3e3e3e;transform:scale(0.9376,1.0000);">Статические маршруты</div>
<div class="t" style="left:71.30px;top:151.14px;font-size:17.30px;color:#3e3e3e;transform:scale(0.9557,1.0000);">Динамические маршруты</div>
<div class="t" style="left:71.30px;top:182.66px;font-size:17.30px;color:#3e3e3e;transform:scale(0.9233,1.0000);">Multi-WAN</div>
<div class="t" style="left:71.30px;top:214.18px;font-size:17.30px;color:#3e3e3e;transform:scale(0.9684,1.0000);">Межсетевой экран</div>
<div class="t" style="left:71.30px;top:245.70px;font-size:17.30px;color:#3e3e3e;transform:scale(0.9416,1.0000);">Журналирование и оповещения</div>
<div class="t" style="left:102.70px;top:277.22px;font-size:17.30px;color:#3e3e3e;transform:scale(0.9408,1.0000);">Локальное хранилище</div>
<div class="t" style="left:102.70px;top:308.74px;font-size:17.30px;color:#3e3e3e;transform:scale(0.9170,1.0000);">Внешнее хранилище</div>
<div class="t" style="left:102.70px;top:340.26px;font-size:17.30px;color:#3e3e3e;transform:scale(0.9377,1.0000);">Почтовые оповещения</div>
<div class="t" style="left:71.20px;top:371.78px;font-size:17.30px;color:#3e3e3e;transform:scale(0.9147,1.0000);">DNS</div>
<div class="t" style="left:71.20px;top:403.30px;font-size:17.30px;color:#3e3e3e;transform:scale(0.8996,1.0000);">DHCP</div>
<div class="t" style="left:71.20px;top:434.82px;font-size:17.30px;color:#3e3e3e;transform:scale(0.9045,1.0000);">SNMP</div>
<div class="t" style="left:102.70px;top:466.34px;font-size:17.30px;color:#3e3e3e;transform:scale(0.9466,1.0000);">Хосты</div>
<div class="t" style="left:102.70px;top:497.86px;font-size:17.30px;color:#3e3e3e;transform:scale(0.9329,1.0000);">SNMP Trap</div>
<div class="t" style="left:71.20px;top:529.38px;font-size:17.30px;color:#3e3e3e;transform:scale(0.8858,1.0000);">SSH</div>
<div class="t" style="left:71.20px;top:560.90px;font-size:17.30px;color:#3e3e3e;transform:scale(0.9200,1.0000);">LLDP</div>
<div class="t" style="left:71.20px;top:592.42px;font-size:17.30px;color:#3e3e3e;transform:scale(0.8948,1.0000);">NetFlow</div>
<div class="t" style="left:102.70px;top:623.94px;font-size:17.30px;color:#3e3e3e;transform:scale(0.9556,1.0000);">Коллекторы</div>
<div class="t" style="left:71.20px;top:655.46px;font-size:17.30px;color:#3e3e3e;transform:scale(0.9706,1.0000);">Дата и время</div>
<div class="t" style="left:71.20px;top:686.98px;font-size:17.30px;color:#3e3e3e;transform:scale(0.9236,1.0000);">Обновления</div>
<div class="t" style="left:71.20px;top:718.50px;font-size:17.30px;color:#3e3e3e;transform:scale(0.9361,1.0000);">Мониторинг</div>
<div class="t" style="left:71.20px;top:750.02px;font-size:17.30px;color:#3e3e3e;transform:scale(0.9821,1.0000);">Доступ к ЦУС</div>
<div class="t" style="left:71.20px;top:781.54px;font-size:17.30px;color:#3e3e3e;transform:scale(0.9180,1.0000);">ICMP-сообщения</div>
<div class="t" style="left:38.60px;top:813.06px;font-size:17.30px;color:#3e3e3e;transform:scale(0.9476,1.0000);">Система обнаружения вторжений</div>
<div class="t" style="left:71.20px;top:844.58px;font-size:17.30px;color:#3e3e3e;transform:scale(0.9296,1.0000);">Переменные СОВ</div>
<svg class="a" style="left:45.3px;top:249.3px;" width="9" height="9" viewBox="0 0 9 9"><path d="M8.5 0.5V8.5H0.5Z" fill="#a5a5a5"/></svg>
<svg class="a" style="left:45.3px;top:438.5px;" width="9" height="9" viewBox="0 0 9 9"><path d="M8.5 0.5V8.5H0.5Z" fill="#a5a5a5"/></svg>
<svg class="a" style="left:45.3px;top:596.1px;" width="9" height="9" viewBox="0 0 9 9"><path d="M8.5 0.5V8.5H0.5Z" fill="#a5a5a5"/></svg>
<svg class="a" style="left:13.4px;top:816.7px;" width="9" height="9" viewBox="0 0 9 9"><path d="M8.5 0.5V8.5H0.5Z" fill="#a5a5a5"/></svg>
</div>
<div class="a " style="left:1156.5px;top:116.0px;width:26.0px;height:871.0px;background:#fdfdfd;border-left:1px solid #d6d6d6;border-right:1px solid #d6d6d6;"></div>
<div class="a " style="left:1156.8px;top:117.8px;width:25.0px;height:24.7px;background:#fff;border:1.5px solid #c8c8c8;"></div>
<svg class="a" style="left:1163.0px;top:126.0px;" width="13" height="8" viewBox="0 0 13 8"><path d="M0 7.5H12.5L6.25 0Z" fill="#6a6a6a"/></svg>
<div class="a " style="left:1158.0px;top:143.5px;width:23.0px;height:41.0px;background:#dadada;"></div>
<div class="a " style="left:1157.0px;top:960.5px;width:24.5px;height:25.0px;background:#fff;border:1px solid #d0d0d0;"></div>
<svg class="a" style="left:1163.0px;top:971.0px;" width="13" height="8" viewBox="0 0 13 8"><path d="M0 0H12.5L6.25 7.5Z" fill="#6a6a6a"/></svg>
<div class="a " style="left:1183.5px;top:113.0px;width:1.0px;height:875.0px;background:#d8d8d8;"></div>
<div class="a " style="left:812.0px;top:987.5px;width:1463.0px;height:1.0px;background:#d2d2d2;"></div>
<div class="t" style="left:1214.60px;top:137.65px;font-size:16.72px;color:#454545;transform:scale(0.9792,1.0000);">Ограничение доступа к ЦУС</div>
<div class="t" style="left:1214.60px;top:177.05px;font-size:16.72px;color:#454545;">Администратор может подключаться только из указанных ниже</div>
<div class="t" style="left:1214.60px;top:195.85px;font-size:16.72px;color:#454545;transform:scale(0.9852,1.0000);">сетей и адресов:</div>
<div class="t" style="left:2149.00px;top:138.65px;font-size:16.72px;color:#454545;transform:scale(0.9381,1.0000);">Вкл.</div>
<svg class="a" style="left:2197.0px;top:137.0px;" width="50" height="21" viewBox="0 0 50 21"><rect x="1" y="1.5" width="47" height="18" rx="9" fill="#217346"/>
<circle cx="38.5" cy="10.5" r="9.3" fill="#d3d3d3" stroke="#c4c4c4" stroke-width="1"/></svg>
<div class="a " style="left:2136.4px;top:182.4px;width:33.4px;height:35.0px;background:#fcfcfc;border:1.5px solid #b2b2b2;"></div>
<div class="a " style="left:2173.9px;top:182.4px;width:33.4px;height:35.0px;background:#fcfcfc;border:1.5px solid #b2b2b2;"></div>
<div class="a " style="left:2211.4px;top:182.4px;width:33.4px;height:35.0px;background:#fcfcfc;border:1.5px solid #b2b2b2;"></div>
<svg class="a" style="left:2141.0px;top:188.0px;" width="25" height="25" viewBox="0 0 25 25"><circle cx="12.1" cy="12.5" r="11.1" fill="#55a888"/><path d="M12.1 5.6V19.4M5.2 12.5H19" stroke="#f4fbf7" stroke-width="4.8"/></svg>
<svg class="a" style="left:2178.0px;top:187.0px;" width="27" height="27" viewBox="0 0 27 27"><path d="M4.83,15.02 L13.20,6.84 L18.24,12.00 L9.86,20.18 Z" fill="#e9b75a"/><path d="M14.06,6.00 L19.29,0.90 L24.32,6.06 L19.10,11.16 Z" fill="#d9532c"/><path d="M1.40,23.40 L4.61,15.23 L9.64,20.39 Z" fill="#3b76b3"/></svg>
<svg class="a" style="left:2216.0px;top:189.0px;" width="24" height="24" viewBox="0 0 24 24"><path d="M2 2L21.5 21.5M21.5 2L2 21.5" stroke="#dc5530" stroke-width="3.3"/></svg>
<div class="a " style="left:1215.0px;top:225.0px;width:1033.0px;height:728.5px;background:#fdfdfd;border:1px solid #d0d0d0;"></div>
<div class="a " style="left:1216.5px;top:226.0px;width:1030.5px;height:46.5px;background:linear-gradient(#ebebeb,#e4e4e4);"></div>
<div class="a " style="left:1216.5px;top:271.5px;width:1030.5px;height:1.5px;background:#ababab;"></div>
<div class="a " style="left:1441.5px;top:232.0px;width:1.0px;height:40.0px;background:#cfcfcf;"></div>
<div class="a " style="left:1666.5px;top:232.0px;width:1.0px;height:40.0px;background:#cfcfcf;"></div>
<div class="t" style="left:1226.70px;top:242.65px;font-size:16.72px;color:#454545;transform:scale(0.9679,1.0000);">Название</div>
<div class="t" style="left:1450.90px;top:242.15px;font-size:16.72px;color:#454545;transform:scale(1.0063,1.0000);">Адрес/Маска</div>
<div class="a " style="left:1219.5px;top:273.5px;width:449.5px;height:41.5px;background:#cecece;"></div>
<svg class="a" style="left:1224.0px;top:282.0px;" width="22" height="24" viewBox="0 0 22 24"><rect x="1.5" y="1.5" width="17" height="14" fill="#fff" stroke="#3b7bc0" stroke-width="3"/>
<rect x="8" y="17" width="4" height="3" fill="#3b7bc0"/><rect x="3" y="19.5" width="14" height="3" fill="#3b7bc0"/></svg>
<div class="t" style="left:1251.80px;top:286.45px;font-size:16.72px;color:#3e3e3e;transform:scale(0.9501,1.0000);">192.168.1.2</div>
<div class="t" style="left:1450.30px;top:286.45px;font-size:16.72px;color:#3e3e3e;transform:scale(0.9490,1.0000);">192.168.1.2</div>
<div class="a " style="left:1912.5px;top:999.5px;width:112.5px;height:34.5px;background:#fdfdfd;border:2px solid #2d6b49;"></div>
<div class="a " style="left:2034.0px;top:999.5px;width:112.5px;height:34.5px;background:#fdfdfd;border:1px solid #b8b8b8;"></div>
<div class="a " style="left:2155.5px;top:999.5px;width:112.5px;height:34.5px;background:#fbfbfb;border:1px solid #c8c8c8;"></div>
<div class="t" style="left:1956.60px;top:1009.05px;font-size:16.72px;color:#3e3e3e;transform:scale(0.9605,1.0000);">OK</div>
<div class="t" style="left:2060.70px;top:1009.05px;font-size:16.72px;color:#3e3e3e;transform:scale(0.9551,1.0000);">Отмена</div>
<div class="t" style="left:2169.40px;top:1009.05px;font-size:16.72px;color:#a8a8a8;transform:scale(0.9633,1.0000);">Применить</div>
<div class="a " style="left:1214.5px;top:408.0px;width:659.0px;height:305.0px;background:#f0f0f0;border:2px solid #3d604c;box-shadow:inset 0 0 0 1px #e6f6ec,0 2px 12px 3px rgba(0,0,0,0.11);"></div>
<div class="a " style="left:1216.5px;top:410.0px;width:655.0px;height:45.0px;background:#217346;"></div>
<div class="t" style="left:1237.50px;top:430.05px;font-size:16.72px;color:#e2f2e8;transform:scale(0.9374,1.0000);">Хост</div>
<svg class="a" style="left:1836.0px;top:424.0px;" width="14" height="14" viewBox="0 0 14 14"><path d="M1 1L12.5 12.5M12.5 1L1 12.5" stroke="#fff" stroke-width="2"/></svg>
<div class="t" style="left:1245.80px;top:491.86px;font-size:17.30px;color:#444;transform:scale(0.9512,1.0000);">Название:</div>
<div class="t" style="left:1244.70px;top:531.66px;font-size:17.30px;color:#444;transform:scale(0.9397,1.0000);">Описание:</div>
<div class="t" style="left:1245.80px;top:593.36px;font-size:17.30px;color:#444;transform:scale(0.9130,1.0000);">Адрес:</div>
<div class="a " style="left:1357.5px;top:483.0px;width:484.5px;height:33.0px;background:#f9f9f9;border:1px solid #d8d8d8;"></div>
<div class="a " style="left:1357.5px;top:526.0px;width:484.5px;height:50.0px;background:#f9f9f9;border:1px solid #d8d8d8;"></div>
<svg class="a" style="left:1820.0px;top:536.0px;" width="14" height="33" viewBox="0 0 14 33"><path d="M0.5 8H13L6.75 1Z" fill="#bdbdbd"/><path d="M0.5 24H13L6.75 31Z" fill="#bdbdbd"/></svg>
<div class="a " style="left:1357.5px;top:587.0px;width:259.0px;height:34.5px;background:#fff;border:1.5px solid #8e8e8e;"></div>
<div class="a " style="left:1632.5px;top:588.0px;width:209.5px;height:33.0px;background:#f9f9f9;border:1px solid #c8c8c8;"></div>
<div class="t" style="left:1368.40px;top:491.06px;font-size:17.30px;color:#3a3a3a;transform:scale(0.9630,1.0000);">192.168.1.2</div>
<div class="t" style="left:1368.40px;top:595.86px;font-size:17.30px;color:#3a3a3a;transform:scale(0.9477,1.0000);">192.168.1.2</div>
<div class="a " style="left:1456.4px;top:594.6px;width:1.8px;height:19.1px;background:#1a1a1a;"></div>
<div class="t" style="left:1644.00px;top:596.85px;font-size:16.72px;color:#3e3e3e;transform:scale(0.9574,1.0000);">Получить IP-адрес хоста</div>
<div class="a " style="left:1605.5px;top:650.5px;width:112.5px;height:34.0px;background:#fdfdfd;border:2px solid #2d6b49;"></div>
<div class="a " style="left:1730.0px;top:650.5px;width:112.0px;height:34.0px;background:#fdfdfd;border:1px solid #c0c0c0;"></div>
<div class="t" style="left:1649.80px;top:659.35px;font-size:16.72px;color:#3e3e3e;transform:scale(0.9398,1.0000);">OK</div>
<div class="t" style="left:1756.00px;top:659.35px;font-size:16.72px;color:#3e3e3e;transform:scale(0.9668,1.0000);">Отмена</div>
<svg class="a" style="left:1845.0px;top:685.0px;" width="13" height="13" viewBox="0 0 13 13"><rect x="9" y="0" width="2.2" height="2.2" fill="#b5b5b5"/><rect x="9" y="4.5" width="2.2" height="2.2" fill="#b5b5b5"/><rect x="4.5" y="4.5" width="2.2" height="2.2" fill="#b5b5b5"/><rect x="9" y="9" width="2.2" height="2.2" fill="#b5b5b5"/><rect x="4.5" y="9" width="2.2" height="2.2" fill="#b5b5b5"/><rect x="0" y="9" width="2.2" height="2.2" fill="#b5b5b5"/></svg>
<svg class="a" style="left:1506.0px;top:583.0px;" width="14" height="26" viewBox="0 0 14 26"><path d="M1 1.5H5.5L7 3L8.5 1.5H13M1 24.5H5.5L7 23L8.5 24.5H13M7 3V23" fill="none" stroke="#1e1e1e" stroke-width="1.9"/></svg>
</body></html>
